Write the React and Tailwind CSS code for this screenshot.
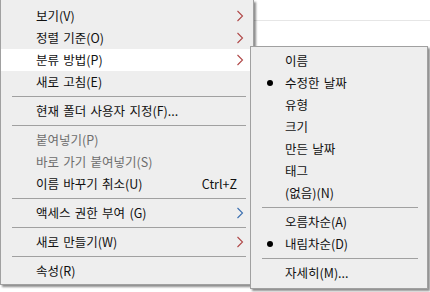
const mainItems = [
  { label: "보기(V)", arrow: true },
  { label: "정렬 기준(O)", arrow: true },
  { label: "분류 방법(P)", arrow: true, active: true },
  { label: "새로 고침(E)" },
  { sep: true },
  { label: "현재 폴더 사용자 지정(F)..." },
  { sep: true },
  { label: "붙여넣기(P)", disabled: true },
  { label: "바로 가기 붙여넣기(S)", disabled: true },
  { label: "이름 바꾸기 취소(U)", shortcut: "Ctrl+Z" },
  { sep: true },
  { label: "액세스 권한 부여 (G)", arrow: true, blue: true },
  { sep: true },
  { label: "새로 만들기(W)", arrow: true },
  { sep: true },
  { label: "속성(R)" },
];

const subItems = [
  { label: "이름" },
  { label: "수정한 날짜", checked: true },
  { label: "유형" },
  { label: "크기" },
  { label: "만든 날짜" },
  { label: "태그" },
  { label: "(없음)(N)" },
  { sep: true },
  { label: "오름차순(A)" },
  { label: "내림차순(D)", checked: true },
  { sep: true },
  { label: "자세히(M)..." },
];

function Chevron({ blue }) {
  return (
    <svg width="8" height="12" viewBox="0 0 8 12" className="shrink-0">
      <polyline
        points="1.5,1 6.5,6 1.5,11"
        fill="none"
        stroke={blue ? "#3b6fb0" : "#b04848"}
        strokeWidth="1.1"
      />
    </svg>
  );
}

function Separator({ right }) {
  return (
    <div className="h-[7px] pt-[3px]">
      <div className={`h-px bg-[#a0a0a0] ml-[11px] ${right}`} />
    </div>
  );
}

export default function App() {
  return (
    <div className="relative w-[430px] h-[292px] overflow-hidden bg-white font-['Noto_Sans_CJK_KR',sans-serif] text-[12.5px] [word-spacing:1.5px] text-[#111]">
      {/* background window */}
      <div className="mt-[20px] ml-[254px] h-px bg-[#e6e6e6]" />

      {/* MAIN MENU */}
      <div className="absolute left-0 top-0 w-[254px] h-[285px] bg-[#eeeeee] border-l border-r border-b border-[#a0a0a0] pt-[5px] shadow-[2px_2px_2px_rgba(0,0,0,0.45)]">
        {mainItems.map((item, i) =>
          item.sep ? (
            <Separator key={i} right="mr-[7px]" />
          ) : (
            <div
              key={i}
              className={`h-[22px] flex items-center justify-between pl-[35px] pr-[9px] ${
                item.active ? "bg-white" : ""
              } ${item.disabled ? "text-[#6d6d6d]" : ""}`}
            >
              <span>{item.label}</span>
              {item.arrow && <Chevron blue={item.blue} />}
              {item.shortcut && <span className="pr-[7px]">{item.shortcut}</span>}
            </div>
          )
        )}
      </div>

      {/* SUBMENU */}
      <div className="absolute left-[250px] top-[46px] w-[178px] h-[243px] bg-[#eeeeee] border border-[#a0a0a0] pt-[3px] shadow-[2px_2px_2px_rgba(0,0,0,0.45)]">
        {subItems.map((item, i) =>
          item.sep ? (
            <Separator key={i} right="mr-[9px]" />
          ) : (
            <div key={i} className="relative h-[22px] flex items-center pl-[34px]">
              {item.checked && (
                <span className="absolute left-[16px] top-[8px] w-[6px] h-[6px] rounded-full bg-black" />
              )}
              <span>{item.label}</span>
            </div>
          )
        )}
      </div>
    </div>
  );
}
